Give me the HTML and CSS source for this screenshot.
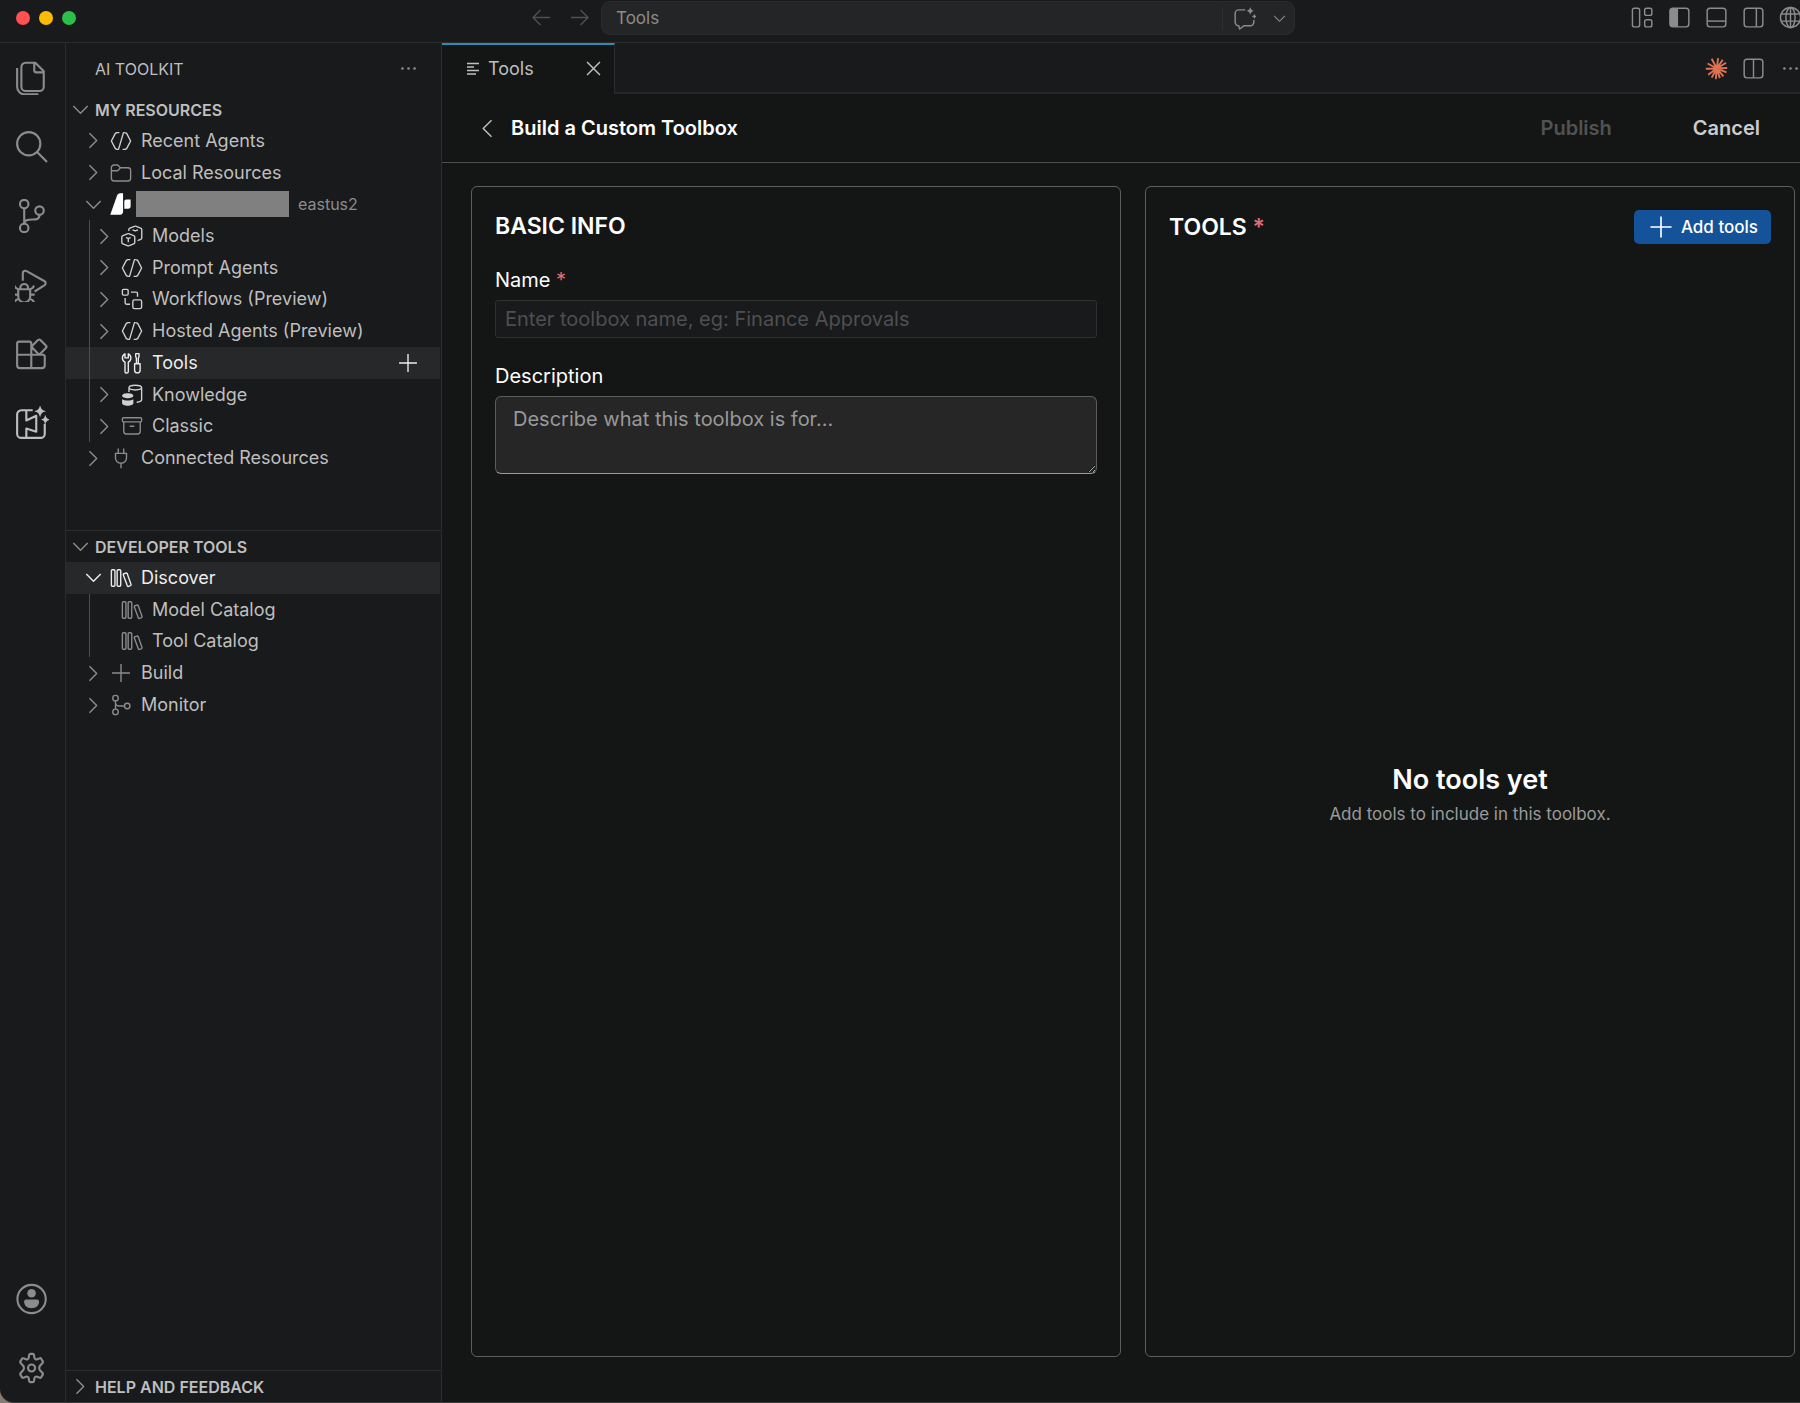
FILE: index.html
```html
<!DOCTYPE html>
<html lang="en">
<head>
<meta charset="utf-8">
<meta name="viewport" content="width=device-width, initial-scale=1">
<title>Tools</title>
<link rel="stylesheet" href="styles.css">
</head>
<body>
<svg class="sprite" aria-hidden="true">
  <symbol id="chev-right" viewBox="0 0 16 16"><path d="M5.2 3l5 5-5 5"/></symbol>
  <symbol id="chev-down" viewBox="0 0 16 16"><path d="M3 5.600l5 5 5-5"/></symbol>
  <symbol id="chev-left" viewBox="0 0 16 16"><path d="M10.800 2.200L5 8l5.800 5.800"/></symbol>
  <symbol id="arrow-left" viewBox="0 0 16 16"><path d="M14 8H2.300M7.300 2.800L2.100 8l5.200 5.200"/></symbol>
  <symbol id="arrow-right" viewBox="0 0 16 16"><path d="M2 8h11.700M8.700 2.800L13.900 8l-5.200 5.200"/></symbol>
  <symbol id="plus" viewBox="0 0 16 16"><path d="M8 1.500v13M1.500 8h13"/></symbol>
  <symbol id="close" viewBox="0 0 16 16"><path d="M3.500 3.500l9 9M12.500 3.500l-9 9"/></symbol>
  <symbol id="dots" viewBox="0 0 16 16"><g class="solid"><circle cx="3.800" cy="8" r=".9"/><circle cx="8" cy="8" r=".9"/><circle cx="12.200" cy="8" r=".9"/></g></symbol>
  <symbol id="agent" viewBox="0 0 16 16"><path d="M6.800 1.900H5L3.900 2.500 1 8l2.900 5.500 1.100.6M9.200 14.100H11l1.100-.6L15 8l-2.900-5.500-1.100-.6M10.800 1.900H9.800L6.200 14.100H4.900"/></symbol>
  <symbol id="folder" viewBox="0 0 16 16"><path d="M1 4.200a2 2 0 0 1 2-2h2.600l2 2H13a2 2 0 0 1 2 2v5.600a2 2 0 0 1-2 2H3a2 2 0 0 1-2-2zM1 6.400h4.200a1 1 0 0 0 .8-.4l1.600-1.800"/></symbol>
  <symbol id="foundry" viewBox="0 0 16 16"><path class="solid" d="M.2 15.800L5 2.200C5.500 .8 6.200 .2 7.400 .2H9.500V13.300C9.500 15 8.800 15.800 7.400 15.800z"/><path class="solid" d="M10.400 6.200C10.400 5.200 11 4.700 12 4.700H15V9.600C15 10.800 14.400 11.400 13.200 11.400H10.400z"/></symbol>
  <symbol id="models" viewBox="0 0 16 16"><path d="M5.300 9.800v2.800M3.600 9.100l1.700.7 1.700-.7M1.400 7.700l3.200-1.300c.5-.2.900-.2 1.400 0l3.200 1.300c.5.200.8.500.8 1v4c0 .5-.3.800-.8 1L6 15c-.5.200-.9.200-1.400 0l-3.200-1.300c-.5-.2-.8-.5-.8-1v-4c0-.5.300-.8.800-1zM5.700 4.300V3.200c0-.5.300-.8.800-1L9.700 1c.5-.2.900-.2 1.400 0l3.200 1.200c.5.200.8.500.8 1v6.200c0 .5-.3.800-.8 1l-2.200.9M8.400 3.500l2 .8 2-.8"/></symbol>
  <symbol id="workflow" viewBox="0 0 16 16"><rect x="1" y="1" width="4.200" height="4.200" rx=".8"/><rect x="8.600" y="8.600" width="6.400" height="6.400" rx="1.200"/><path d="M7.200 3h3.800a1 1 0 0 1 1 1v2.400M3 7.200V10.800a1 1 0 0 0 1 1h2.600"/></symbol>
  <symbol id="tools" viewBox="0 0 16 16"><path d="M2.900 14.100V7.300C1.700 6.700 1 5.700 1 4.300 1 3 1.700 1.900 2.900 1.300v3h2.400v-3C6.500 1.900 7.200 3 7.200 4.300c0 1.400-.7 2.400-1.900 3v6.800c0 1.600-2.400 1.600-2.400 0z"/><path d="M10.700 1.200h2.400v2l-.5 1.400v3.800h-1.400V4.600l-.5-1.400zM9.900 8.500h4v4.700c0 2.600-4 2.600-4 0z"/></symbol>
  <symbol id="knowledge" viewBox="0 0 16 16"><path d="M5.800 5.800V2.600M15 2.600v8.900c0 .9-1.700 1.600-3.600 1.800M5.800 2.600C5.800 .3 15 .3 15 2.600s-9.200 2.300-9.200 0z"/><path class="solid" d="M.8 8.600c0-2.400 8.200-2.400 8.200 0S.8 11 .8 8.600zM.8 11c1.600 1.300 6.600 1.300 8.200 0v3c0 2.400-8.200 2.400-8.200 0z"/></symbol>
  <symbol id="archive" viewBox="0 0 16 16"><rect x="1" y="2" width="14" height="3" rx=".8"/><path d="M2 5v6.800a2 2 0 0 0 2 2h8a2 2 0 0 0 2-2V5M6.300 8.200h3.400"/></symbol>
  <symbol id="plug" viewBox="0 0 16 16"><path d="M6 1v3.600M10 1v3.600M4 4.600h8v3.600a4 3.600 0 0 1-8 0zM8 11.800V15.400"/></symbol>
  <symbol id="library" viewBox="0 0 16 16"><rect x="1" y="2" width="2.600" height="12" rx=".8"/><rect x="5.200" y="2" width="2.600" height="12" rx=".8"/><path d="M10.100 4.900l1.500-.5c.4-.1.700 0 .9.400l2.800 7.900c.1.400 0 .7-.4.900l-1.400.5c-.4.100-.7 0-.9-.4L9.700 5.800c-.1-.4 0-.7.400-.9z"/></symbol>
  <symbol id="monitor" viewBox="0 0 16 16"><circle cx="4" cy="3" r="2"/><circle cx="4" cy="13" r="2"/><circle cx="12.500" cy="8.700" r="2"/><path d="M4 5v6M4 6.300c0 1.800 1.500 2.400 3 2.400h3.500"/></symbol>
  <symbol id="files" viewBox="0 0 24 24"><path d="M7.500 1.200h6.800l6 6v11a3 3 0 0 1-3 3H7.500a3 3 0 0 1-3-3v-14a3 3 0 0 1 3-3zM13.600 1.300V6.500a1.500 1.500 0 0 0 1.500 1.500h5.100M1.500 5v13.200C1.500 21.300 4 23.600 7 23.600h9.500"/></symbol>
  <symbol id="search" viewBox="0 0 24 24"><circle cx="9.700" cy="9.700" r="8.200"/><path d="M15.600 15.600l7 7"/></symbol>
  <symbol id="scm" viewBox="0 0 24 24"><circle cx="6.500" cy="3.600" r="3"/><circle cx="6.500" cy="20.400" r="3"/><circle cx="17.300" cy="8.200" r="3"/><path d="M6.500 6.600v10.800M17.300 11.200c0 3.300-2.400 3.300-5 3.300-3.300 0-5.800.2-5.800 3"/></symbol>
  <symbol id="debug" viewBox="0 0 24 24"><path d="M5.500 9V3.700C5.500 2.200 7 1.500 8.200 2.200l12.400 7c1.400.8 1.400 2.100.1 3L13.800 16.600M2.300 15h8.400v5.200a4.200 4.200 0 0 1-8.400 0zM3.700 14.500c0-4.300 5.600-4.300 5.600 0M-.5 12.500l1 1.500 1.800 1M13.500 12.500l-1 1.500-1.800 1M-.9 18.800h3M13.900 18.800h-3M-.5 24.300l1-1.500 2-1.200M13.500 24.300l-1-1.500-2-1.200"/></symbol>
  <symbol id="extensions" viewBox="0 0 24 24"><path d="M3 3.300h7a1.500 1.500 0 0 1 1.500 1.500V12.500h8a1.500 1.500 0 0 1 1.500 1.500v6a2 2 0 0 1-2 2H3.500a2 2 0 0 1-2-2V4.800A1.500 1.500 0 0 1 3 3.300zM1.500 12.500h10V22M16.200 2.200a1.300 1.300 0 0 1 1.800 0l3.800 3.800a1.300 1.300 0 0 1 0 1.800L18 11.600a1.300 1.300 0 0 1-1.800 0l-3.800-3.800a1.300 1.300 0 0 1 0-1.800z"/></symbol>
  <symbol id="aitk" viewBox="0 0 24 24"><path d="M12.500 3h-8a3 3 0 0 0-3 3v13.500a3 3 0 0 0 3 3h13.500a3 3 0 0 0 3-3v-7M8 3v7.200l7-3.300v11.200l-7-2.200V22.500"/><path class="solid" d="M17.700 -.5c.9 2.900 1.400 3.400 4.100 4.200-2.700.8-3.200 1.300-4.100 4.200-.9-2.900-1.400-3.400-4.100-4.200 2.700-.8 3.200-1.300 4.100-4.200zM21.400 6.100c.6 2.300 1.200 2.900 3.400 3.500-2.200.6-2.800 1.200-3.400 3.500-.6-2.300-1.200-2.900-3.400-3.500 2.200-.6 2.800-1.200 3.400-3.500z"/></symbol>
  <symbol id="account" viewBox="0 0 24 24"><circle cx="11.700" cy="12" r="10"/><g class="solid"><circle cx="11.700" cy="8" r="3"/><path d="M7.900 12.400h7.600c.9 0 1.500.6 1.500 1.400 0 3-2.300 4.700-5.300 4.700s-5.300-1.700-5.300-4.700c0-.8.600-1.400 1.500-1.400z"/></g></symbol>
  <symbol id="gear" viewBox="0 0 24 24"><circle cx="11.700" cy="12" r="2.500"/><path d="M10 2.800c.1-.5.400-.8.900-.8h1.600c.5 0 .8.300.9.800l.3 1.900c.1.900 1 1.500 1.900 1.200l1.900-.7c.4-.2.900 0 1.100.4l1 1.700c.2.400.200.9-.2 1.200L18 10c-.7.600-.9 1.300-.9 2s.2 1.400.9 2l1.400 1.500c.4.300.4.800.2 1.200l-1 1.700c-.2.400-.7.600-1.100.4l-1.900-.7c-.9-.3-1.800.3-1.900 1.200l-.3 1.900c-.1.500-.4.800-.9.800h-1.600c-.5 0-.8-.3-.9-.8l-.3-1.900c-.1-.9-1-1.500-1.900-1.200l-1.900.7c-.4.200-.9 0-1.100-.4l-1-1.700c-.2-.4-.2-.9.200-1.200L5.400 14c.7-.6.900-1.300.9-2s-.2-1.400-.9-2L4 8.500c-.4-.3-.4-.8-.2-1.200l1-1.700c.2-.4.7-.6 1.100-.4l1.900.7c.9.3 1.800-.3 1.900-1.200z"/></symbol>
  <symbol id="lines" viewBox="0 0 16 16"><path d="M2 2.500h12M2 6h7M2 9.500h12M2 13h9"/></symbol>
  <symbol id="chat" viewBox="0 0 16 16"><path d="M8.500 2H4a2.500 2.500 0 0 0-2.500 2.500v6A2.500 2.500 0 0 0 4 13l.6 2.300L7.800 13H12a2.500 2.500 0 0 0 2.500-2.500V9"/><path class="solid" d="M12 0c.5 1.800.8 2.100 2.500 2.700-1.700.6-2 .9-2.500 2.700-.5-1.800-.8-2.100-2.500-2.700C11.200 2.100 11.500 1.800 12 0zM14.800 4.500c.3 1.300.6 1.600 1.800 2-1.200.4-1.500.7-1.800 2-.3-1.300-.6-1.600-1.800-2 1.200-.4 1.500-.7 1.800-2z"/></symbol>
  <symbol id="layout" viewBox="0 0 16 16"><rect x="1" y="1.500" width="5" height="13" rx="1.300"/><rect x="9.500" y="1.500" width="5" height="5" rx="1.300"/><rect x="9.500" y="9.500" width="5" height="5" rx="1.300"/></symbol>
  <symbol id="panel-left" viewBox="0 0 16 16"><rect x="1.500" y="1.500" width="13" height="13" rx="2"/><path class="solid" d="M3 1.500h4v13H3a2 2 0 0 1-2-2v-9a2 2 0 0 1 2-2z"/></symbol>
  <symbol id="panel-bottom" viewBox="0 0 16 16"><rect x="1.500" y="1.500" width="13" height="13" rx="2"/><path d="M1.500 10.500h13"/></symbol>
  <symbol id="panel-right" viewBox="0 0 16 16"><rect x="1.500" y="1.500" width="13" height="13" rx="2"/><path d="M10 1.500v13"/></symbol>
  <symbol id="split" viewBox="0 0 16 16"><rect x="1.500" y="1.500" width="13" height="13" rx="2"/><path d="M8 1.500v13"/></symbol>
  <symbol id="globe" viewBox="0 0 16 16"><circle cx="8" cy="8" r="7"/><ellipse cx="8" cy="8" rx="3.200" ry="7"/><path d="M1.600 5.500h12.800M1.600 10.500h12.800M8 1v14"/></symbol>
  <symbol id="burst" viewBox="0 0 24 24"><path d="M12.300 12L13.700 1.200M12.300 12L18.500 2.800M12.300 12L22 6M12.300 12L23.200 11.500M12.300 12L22.500 16M12.300 12L19.300 20.300M12.300 12L15.500 22M12.300 12L11.300 23M12.300 12L7 21.500M12.300 12L3.300 18.500M12.300 12L.8 12.300M12.300 12L2.700 6.800M12.300 12L7 1.800"/></symbol>
</svg>

<div class="window">
  <header class="titlebar">
    <div class="titlebar-left">
      <div class="lights"><span class="light red"></span><span class="light yellow"></span><span class="light green"></span></div>
      <nav class="history" aria-label="History">
        <button type="button" aria-label="Back"><svg class="ico"><use href="#arrow-left"/></svg></button>
        <button type="button" aria-label="Forward"><svg class="ico"><use href="#arrow-right"/></svg></button>
      </nav>
    </div>
    <div class="command">
      <button type="button" class="command-text">Tools</button>
      <button type="button" class="command-chat" aria-label="Chat"><svg class="ico"><use href="#chat"/></svg></button>
      <button type="button" class="command-more" aria-label="More"><svg class="ico small"><use href="#chev-down"/></svg></button>
    </div>
    <div class="window-actions">
      <button type="button" aria-label="Customize layout"><svg class="ico"><use href="#layout"/></svg></button>
      <button type="button" aria-label="Toggle side bar"><svg class="ico"><use href="#panel-left"/></svg></button>
      <button type="button" aria-label="Toggle panel"><svg class="ico"><use href="#panel-bottom"/></svg></button>
      <button type="button" aria-label="Toggle secondary side bar"><svg class="ico"><use href="#panel-right"/></svg></button>
      <button type="button" aria-label="Browser"><svg class="ico"><use href="#globe"/></svg></button>
    </div>
  </header>

  <div class="workbench">
    <nav class="activity" aria-label="Activity bar">
      <button type="button" aria-label="Explorer"><svg class="ico"><use href="#files"/></svg></button>
      <button type="button" aria-label="Search"><svg class="ico"><use href="#search"/></svg></button>
      <button type="button" aria-label="Source control"><svg class="ico"><use href="#scm"/></svg></button>
      <button type="button" aria-label="Run and debug"><svg class="ico"><use href="#debug"/></svg></button>
      <button type="button" aria-label="Extensions"><svg class="ico"><use href="#extensions"/></svg></button>
      <button type="button" class="active" aria-label="AI Toolkit"><svg class="ico"><use href="#aitk"/></svg></button>
      <span class="spacer"></span>
      <button type="button" aria-label="Account"><svg class="ico"><use href="#account"/></svg></button>
      <button type="button" aria-label="Settings"><svg class="ico"><use href="#gear"/></svg></button>
    </nav>

    <aside class="sidebar">
      <div class="sidebar-title"><h2>AI TOOLKIT</h2><button type="button" aria-label="More actions"><svg class="ico"><use href="#dots"/></svg></button></div>

      <section class="pane resources">
        <h3 class="pane-head"><svg class="ico"><use href="#chev-down"/></svg>MY RESOURCES</h3>
        <ul class="tree">
          <li class="row"><svg class="ico twist"><use href="#chev-right"/></svg><svg class="ico bright"><use href="#agent"/></svg><span>Recent Agents</span></li>
          <li class="row"><svg class="ico twist"><use href="#chev-right"/></svg><svg class="ico"><use href="#folder"/></svg><span>Local Resources</span></li>
          <li class="row project"><svg class="ico twist"><use href="#chev-down"/></svg><svg class="ico white"><use href="#foundry"/></svg><span class="redacted"></span><span class="region">eastus2</span></li>
          <li class="row child"><svg class="ico twist"><use href="#chev-right"/></svg><svg class="ico bright"><use href="#models"/></svg><span>Models</span></li>
          <li class="row child"><svg class="ico twist"><use href="#chev-right"/></svg><svg class="ico bright"><use href="#agent"/></svg><span>Prompt Agents</span></li>
          <li class="row child"><svg class="ico twist"><use href="#chev-right"/></svg><svg class="ico bright"><use href="#workflow"/></svg><span>Workflows (Preview)</span></li>
          <li class="row child"><svg class="ico twist"><use href="#chev-right"/></svg><svg class="ico bright"><use href="#agent"/></svg><span>Hosted Agents (Preview)</span></li>
          <li class="row child selected"><svg class="ico twist"></svg><svg class="ico"><use href="#tools"/></svg><span>Tools</span><button type="button" class="row-add" aria-label="Add tool"><svg class="ico"><use href="#plus"/></svg></button></li>
          <li class="row child"><svg class="ico twist"><use href="#chev-right"/></svg><svg class="ico bright"><use href="#knowledge"/></svg><span>Knowledge</span></li>
          <li class="row child"><svg class="ico twist"><use href="#chev-right"/></svg><svg class="ico"><use href="#archive"/></svg><span>Classic</span></li>
          <li class="row"><svg class="ico twist"><use href="#chev-right"/></svg><svg class="ico"><use href="#plug"/></svg><span>Connected Resources</span></li>
        </ul>
      </section>

      <section class="pane developer">
        <h3 class="pane-head"><svg class="ico"><use href="#chev-down"/></svg>DEVELOPER TOOLS</h3>
        <ul class="tree">
          <li class="row selected"><svg class="ico twist"><use href="#chev-down"/></svg><svg class="ico"><use href="#library"/></svg><span>Discover</span></li>
          <li class="row child"><svg class="ico twist"></svg><svg class="ico"><use href="#library"/></svg><span>Model Catalog</span></li>
          <li class="row child"><svg class="ico twist"></svg><svg class="ico"><use href="#library"/></svg><span>Tool Catalog</span></li>
          <li class="row"><svg class="ico twist"><use href="#chev-right"/></svg><svg class="ico"><use href="#plus"/></svg><span>Build</span></li>
          <li class="row"><svg class="ico twist"><use href="#chev-right"/></svg><svg class="ico"><use href="#monitor"/></svg><span>Monitor</span></li>
        </ul>
      </section>

      <section class="pane help">
        <h3 class="pane-head"><svg class="ico"><use href="#chev-right"/></svg>HELP AND FEEDBACK</h3>
      </section>
    </aside>

    <main class="editor">
      <div class="tabs">
        <div class="tab"><svg class="ico tab-icon"><use href="#lines"/></svg><span>Tools</span><button type="button" aria-label="Close tab"><svg class="ico"><use href="#close"/></svg></button></div>
        <div class="tab-actions">
          <button type="button" aria-label="Assistant"><svg class="ico burst"><use href="#burst"/></svg></button>
          <button type="button" aria-label="Split editor"><svg class="ico"><use href="#split"/></svg></button>
          <button type="button" aria-label="More actions"><svg class="ico"><use href="#dots"/></svg></button>
        </div>
      </div>

      <div class="page-head">
        <button type="button" class="back" aria-label="Back"><svg class="ico"><use href="#chev-left"/></svg></button>
        <h1>Build a Custom Toolbox</h1>
        <button type="button" class="text-button" disabled>Publish</button>
        <button type="button" class="text-button">Cancel</button>
      </div>

      <div class="cards">
        <form class="card">
          <h2>BASIC INFO</h2>
          <label for="name">Name <span class="required">*</span></label>
          <input id="name" type="text" placeholder="Enter toolbox name, eg: Finance Approvals">
          <label for="description">Description</label>
          <textarea id="description" placeholder="Describe what this toolbox is for..."></textarea>
        </form>
        <section class="card">
          <div class="card-head">
            <h2>TOOLS <span class="required">*</span></h2>
            <button type="button" class="primary"><svg class="ico"><use href="#plus"/></svg>Add tools</button>
          </div>
          <div class="empty">
            <h3>No tools yet</h3>
            <p>Add tools to include in this toolbox.</p>
          </div>
        </section>
      </div>
    </main>
  </div>
</div>
</body>
</html>
```
FILE: styles.css
```css
:root {
  --side: #191a1b;
  --editor: #141615;
  --line: #2a2b2c;
  --text: #bfbfbf;
  --icon: #8c8c8c;
}

* { box-sizing: border-box; }

body {
  margin: 0;
  background: #857c76;
  color: var(--text);
  font-family: Inter, "Liberation Sans", sans-serif;
  font-size: 18px;
  line-height: 24px;
  overflow: hidden;
}

h1, h2, h3, p, ul { margin: 0; padding: 0; font-weight: 600; }
ul { list-style: none; font-weight: 400; }

button {
  display: flex;
  align-items: center;
  justify-content: center;
  padding: 0;
  border: 0;
  background: none;
  color: inherit;
  font: inherit;
}

.sprite { display: none; }

.ico {
  flex: none;
  width: 23px;
  height: 23px;
  fill: none;
  stroke: currentColor;
  stroke-width: 1;
  stroke-linejoin: round;
  overflow: visible;
}
.ico.small { width: 17px; height: 17px; }
.solid { fill: currentColor; stroke: none; }

.window {
  display: flex;
  flex-direction: column;
  height: 100vh;
  background: var(--side);
  border-bottom: 1px solid #38393a;
  border-bottom-left-radius: 14px;
  overflow: hidden;
}

/* Title bar */
.titlebar {
  display: flex;
  flex: none;
  height: 43px;
  border-bottom: 1px solid var(--line);
  padding-bottom: 7px;
  color: var(--icon);
}
.titlebar-left {
  display: flex;
  flex: 0 0 601px;
  align-items: center;
  justify-content: space-between;
  padding: 0 10px 0 16px;
}
.lights { display: flex; gap: 9px; }
.light { width: 14px; height: 14px; border-radius: 50%; }
.red { background: #ff5052; }
.yellow { background: #fdbc04; }
.green { background: #2cc04b; }
.history { display: flex; gap: 15px; color: #4f5051; }

.command {
  display: flex;
  flex: 0 1 694px;
  align-items: center;
  margin-top: 1px;
  border: 1px solid var(--line);
  border-radius: 9px;
  background: #242526;
  font-size: 17px;
}
.command-text { flex: 1; justify-content: flex-start; padding-left: 14px; }
.command-chat { padding: 0 15px 0 10px; border-left: 1px solid #2e2f30; }
.command-more { padding-right: 6px; }

.window-actions {
  display: flex;
  align-items: center;
  gap: 14px;
  margin-left: auto;
  margin-right: -2px;
}

/* Activity bar */
.workbench { display: flex; flex: 1; min-height: 0; }
.activity {
  display: flex;
  flex-direction: column;
  flex: 0 0 66px;
  border-right: 1px solid var(--line);
  color: var(--icon);
}
.activity button { height: 69px; padding-right: 2px; }
.activity .ico { width: 34px; height: 34px; stroke-width: 1.5; }
.activity .active { color: var(--text); }
.spacer { flex: 1; }

/* Side bar */
.sidebar {
  display: flex;
  flex-direction: column;
  flex: 0 0 376px;
  border-right: 1px solid var(--line);
}
.sidebar-title {
  display: flex;
  flex: none;
  align-items: center;
  justify-content: space-between;
  height: 51px;
  padding: 0 21px 0 29px;
}
.sidebar-title h2 { font-size: 16px; font-weight: 400; }
.sidebar-title .ico { color: var(--icon); }
.pane-head {
  display: flex;
  align-items: center;
  gap: 3px;
  height: 31px;
  padding-left: 3px;
  font-size: 16px;
  font-weight: 600;
}
.pane-head .ico { color: var(--icon); }
.resources { flex: 0 0 436px; }
.developer { flex: 1; border-top: 1px solid var(--line); }
.help { border-top: 1px solid var(--line); }

.tree { display: grid; grid-auto-rows: 1fr; }
.resources .tree { height: 349px; }
.developer .tree { height: 159px; }
.row {
  display: flex;
  align-items: center;
  margin-right: 1px;
  padding-left: 16px;
  white-space: nowrap;
}
.row .ico { width: 22px; height: 22px; margin-right: 9px; color: var(--icon); }
.row .twist { width: 23px; height: 23px; margin-right: 5px; }
.row .bright { color: #d0d0d0; }
.row .white { margin-right: 4px; color: #fff; }
.child { padding-left: 23px; }
.child::before {
  content: "";
  align-self: stretch;
  width: 1px;
  margin-right: 3px;
  background: #4c4d4e;
}
.selected { background: #272829; color: #ededed; }
.selected .ico { color: #ededed; }
.row-add { margin: 0 12px 0 auto; }
.redacted { width: 153px; height: 26px; background: #808080; }
.region { margin-left: 9px; color: var(--icon); font-size: 16px; }

/* Editor */
.editor {
  display: flex;
  flex: 1;
  flex-direction: column;
  min-width: 0;
  background: var(--editor);
}
.tabs { display: flex; flex: none; height: 51px; }
.tab {
  display: flex;
  align-items: center;
  width: 173px;
  padding: 0 9px 2px 23px;
  border-top: 2px solid #3289b5;
  border-right: 1px solid var(--line);
}
.tab-icon { width: 16px; height: 16px; margin-right: 7px; stroke-width: 1.4; }
.tab button { margin-left: auto; }
.tab-actions {
  display: flex;
  flex: 1;
  align-items: center;
  justify-content: flex-end;
  gap: 14px;
  padding-top: 1px;
  border-bottom: 2px solid #262728;
  background: var(--side);
  color: var(--icon);
}
.tab-actions button:last-child { margin-right: -2px; }
.burst { color: #dd7355; stroke-width: 2; }

.page-head {
  display: flex;
  flex: none;
  align-items: center;
  height: 69px;
  padding: 0 5px 0 34px;
  border-bottom: 1px solid #4b4c4c;
}
.page-head h1 { flex: 1; margin-left: 12px; color: #fff; font-size: 20px; }
.text-button { margin-left: 11px; padding: 0 35px; height: 36px; font-size: 20px; font-weight: 600; color: #ccc; }
.text-button:disabled { color: #515252; }

.cards {
  display: grid;
  flex: 1;
  grid-template-columns: 1fr 1fr;
  gap: 24px;
  min-height: 0;
  padding: 23px 5px 45px 29px;
}
.card {
  display: flex;
  flex-direction: column;
  min-width: 0;
  padding: 23px;
  border: 1px solid #5c5d5d;
  border-radius: 6px;
}
.card h2 { color: #fff; font-size: 23px; line-height: 32px; }
.required { color: #e06c6f; }
.card label { margin-top: 26px; color: #fff; font-size: 20px; }
.card input, .card textarea {
  width: 100%;
  margin-top: 8px;
  outline: 0;
  color: var(--text);
  font: inherit;
  font-size: 20px;
}
.card input {
  height: 38px;
  padding: 0 9px;
  border: 1px solid #2e3030;
  border-radius: 3px;
  background: var(--side);
}
.card textarea {
  height: 78px;
  padding: 10px 17px;
  border: 1px solid #5c5c5c;
  border-bottom-color: #9a9a9a;
  border-radius: 6px;
  background: #262626;
}
.card input::placeholder { color: #4e4f50; opacity: 1; }
.card textarea::placeholder { color: #999; opacity: 1; }

.card-head { display: flex; align-items: center; justify-content: space-between; height: 34px; }
.primary {
  gap: 7px;
  height: 34px;
  padding: 0 13px 0 14px;
  border-radius: 5px;
  background: #14539a;
  color: #fff;
  font-size: 17px;
  font-weight: 500;
}
.primary .ico { width: 26px; height: 26px; }
.empty {
  display: flex;
  flex: 1;
  flex-direction: column;
  align-items: center;
  justify-content: center;
  padding-top: 10px;
}
.empty h3 { color: #fff; font-size: 27px; line-height: 38px; }
.empty p { margin-top: 3px; color: #9a9a9a; font-size: 17px; font-weight: 400; }
```
